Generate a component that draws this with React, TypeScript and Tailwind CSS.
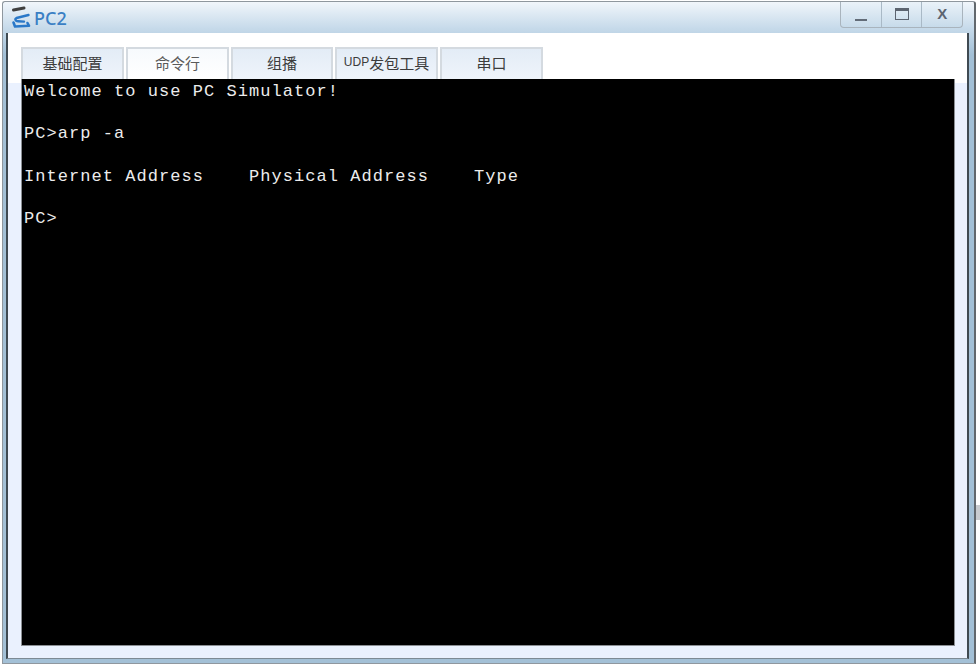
const tabs = [
  { label: "基础配置", w: "w-[103px]", active: false, color: "text-[#3c3c3c]" },
  { label: "命令行", w: "w-[103px]", active: true, color: "text-[#5a5a5a]" },
  { label: "组播", w: "w-[102px]", active: false, color: "text-[#3c3c3c]" },
  { label: "发包工具", prefix: "UDP", w: "w-[103px]", active: false, color: "text-[#3c3c3c]" },
  { label: "串口", w: "w-[103px]", active: false, color: "text-[#3c3c3c]" },
];

const lines = [
  "Welcome to use PC Simulator!",
  " ",
  "PC>arp -a",
  " ",
  "Internet Address    Physical Address    Type",
  " ",
  "PC>",
];

function Logo() {
  return (
    <svg width="22" height="24" viewBox="0 0 22 24" className="shrink-0">
      <path d="M2.5 4 L13 2" stroke="#3f3f3f" strokeWidth="3" strokeLinecap="round" fill="none" />
      <path d="M17.5 9 L5.5 12 C3.5 13 4.5 15 7 15.2 L13 15.6" stroke="#2a78c8" strokeWidth="2.4" fill="none" strokeLinecap="round" strokeLinejoin="round" />
      <path d="M2.5 16.5 L4 20.5 L18 19.8 L16.5 17" stroke="#2a78c8" strokeWidth="2.6" fill="none" strokeLinecap="round" strokeLinejoin="round" />
    </svg>
  );
}

export default function App() {
  return (
    <div className="w-[980px] h-[668px] bg-white pt-px pl-0.5 relative overflow-hidden">
      <div className="w-[974px] h-[663px] flex flex-col border border-[#8f979e] border-r-2 border-r-[#62686d] rounded-t-[3px] bg-[#a9c4d9] bg-gradient-to-b from-[#f1f6fb] via-[#c6daea] to-[#a3c0d6] to-[8%] via-[4%]">
        <div className="h-[31px] shrink-0 flex items-start justify-between pl-[8px] pr-[11px]">
          <div className="flex items-center h-[31px]">
            <Logo />
            <span className="text-[18px] font-medium font-['Noto_Sans',sans-serif] text-[#3a7fc4] leading-none ml-[1px] mt-[1px]">PC2</span>
          </div>
          <div className="flex h-[26px] w-[123px] border-x border-b border-[#a9b4bd] rounded-b-[4px] bg-gradient-to-b from-[#eaf2f9] to-[#c7dbea]">
            <div className="flex-1 flex items-center justify-center border-r border-[#a9b9c6]">
              <div className="w-[12px] h-[2px] bg-[#626c78] mt-[10px]" />
            </div>
            <div className="flex-1 flex items-center justify-center border-r border-[#a9b9c6]">
              <div className="w-[14px] h-[12px] border border-[#5c6470] border-t-[3px] mb-[2px]" />
            </div>
            <div className="flex-1 flex items-center justify-center">
              <span className="text-[15px] font-bold font-['Liberation_Sans',sans-serif] text-[#5c6470] leading-none mb-[2px]">X</span>
            </div>
          </div>
        </div>
        <div className="flex-1 ml-[3px] mr-[5px] mb-[4px] border-l-2 border-r-2 border-[#3f4a52] border-b border-b-[#7d8a94] bg-gradient-to-b from-white from-[8%] to-[#eaf1fe] to-[8%] pt-[14px] pl-[13px] pr-[12px] pb-[12px] flex flex-col">
          <div className="flex gap-[2px] h-[32px] shrink-0">
            {tabs.map((t) => (
              <div
                key={t.label}
                className={`${t.w} flex items-center justify-center pb-[4px] border-2 border-b-0 border-[#d4dae0] text-[15px] leading-none font-['Noto_Sans_CJK_SC','Liberation_Sans',sans-serif] ${t.color} ${
                  t.active ? "bg-gradient-to-b from-[#f7fafd] to-white" : "bg-gradient-to-b from-[#e3ecf6] to-[#eff4fb]"
                }`}
              >
                {t.prefix ? <span className="text-[12px] font-['Liberation_Sans',sans-serif]">{t.prefix}</span> : null}
                {t.label}
              </div>
            ))}
          </div>
          <div className="flex-1 bg-black border-l border-b border-r border-[#8b8f94] pl-[2px] pt-[2px] font-['Liberation_Mono',monospace] text-[#ececec] text-[17px] tracking-[1.05px] leading-[21.2px] whitespace-pre">
            {lines.map((l, i) => (
              <div key={i} className="h-[21.2px]">{l}</div>
            ))}
          </div>
        </div>
      </div>
      <div className="absolute right-0 top-[505px] w-[4px] h-[15px] bg-[#c9ccd0]" />
    </div>
  );
}
